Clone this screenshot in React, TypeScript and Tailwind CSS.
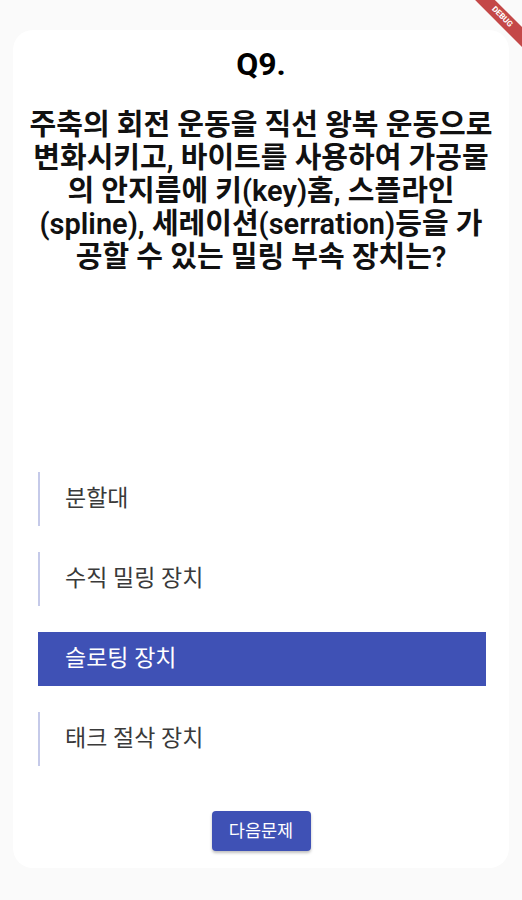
const options = ["분할대", "수직 밀링 장치", "슬로팅 장치", "태크 절삭 장치"];
const selected = 2;

const questionLines = [
  "주축의 회전 운동을 직선 왕복 운동으로",
  "변화시키고, 바이트를 사용하여 가공물",
  "의 안지름에 키(key)홈, 스플라인",
  "(spline), 세레이션(serration)등을 가",
  "공할 수 있는 밀링 부속 장치는?",
];

export default function App() {
  return (
    <div
      className="relative h-[900px] w-[522px] overflow-hidden bg-[#fafafa] pt-[30px] px-[13px]"
      style={{ fontFamily: 'Roboto, "Noto Sans CJK KR", sans-serif' }}
    >
      <div className="flex h-[838px] flex-col items-center rounded-[20px] bg-white pt-[15px] px-[2px]">
        <h1 className="text-[32px] font-bold leading-[38px] text-black">Q9.</h1>
        <p className="mt-[26px] whitespace-nowrap text-center text-[29px] font-semibold leading-[33px] text-[#111]">
          {questionLines.map((line) => (
            <span key={line} className="block">
              {line}
            </span>
          ))}
        </p>

        <div className="mt-[198px] flex w-full flex-col gap-[26px] pl-[23px] pr-[21px]">
          {options.map((opt, i) =>
            i === selected ? (
              <div
                key={opt}
                className="flex h-[54px] items-center bg-[#3f51b5] pl-[27px] text-[23px] text-white"
              >
                {opt}
              </div>
            ) : (
              <div
                key={opt}
                className="flex h-[54px] items-center border-l-2 border-[#c5cae9] pl-[25px] text-[23px] text-[#3a3a3a]"
              >
                {opt}
              </div>
            )
          )}
        </div>

        <button className="mt-[45px] h-[40px] w-[99px] rounded-[4px] bg-[#3f51b5] text-[17.5px] text-white shadow-[0_2px_3px_rgba(0,0,0,0.25)]">
          다음문제
        </button>
      </div>

      <div className="absolute right-[-30px] top-[10px] flex h-[14px] w-[100px] rotate-45 items-center justify-center bg-[#b71c1c]/80 text-[8px] font-bold text-white">
        DEBUG
      </div>
    </div>
  );
}
